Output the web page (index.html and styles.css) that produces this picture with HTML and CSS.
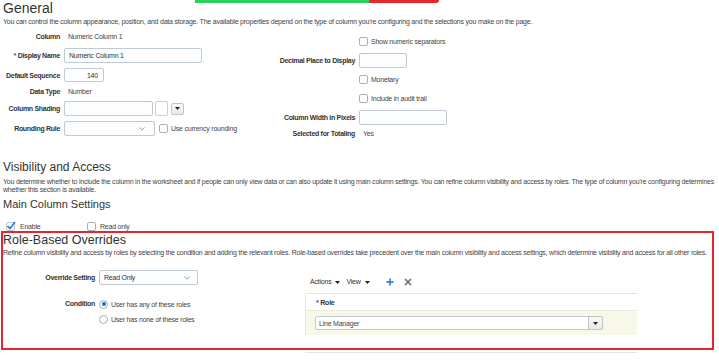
FILE: index.html
```html
<!DOCTYPE html>
<html lang="en">
<head>
  <meta charset="UTF-8">
  <title>Edit Column</title>
  <link rel="stylesheet" href="styles.css">
</head>
<body>

  <div class="progress">
    <div class="progress-ok"></div>
    <div class="progress-bad"></div>
  </div>

  <div id="page">
    <h2 class="title-general">General</h2>
    <p class="desc">You can control the column appearance, position, and data storage. The available properties depend on the type of column you're configuring and the selections you make on the page.</p>

    <div class="form">
      <div class="form-grid left-grid">
        <div class="label">Column</div>
        <div class="value">Numeric Column 1</div>

        <div class="label"><span class="req">*</span> Display Name</div>
        <div><input class="field name-field" type="text" value="Numeric Column 1"></div>

        <div class="label">Default Sequence</div>
        <div><input class="field seq-field" type="text" value="140"></div>

        <div class="label">Data Type</div>
        <div class="value">Number</div>

        <div class="label">Column Shading</div>
        <div class="inline">
          <input class="field shade-field" type="text">
          <span class="swatch"></span>
          <span class="drop-btn">
            <svg width="5" height="3" viewBox="0 0 5 3"><polygon points="0,0 5,0 2.5,3" fill="#222"/></svg>
          </span>
        </div>

        <div class="label">Rounding Rule</div>
        <div class="inline">
          <div class="select rounding-select">
            <span></span>
            <svg class="chevron" width="6" height="4" viewBox="0 0 6 4"><polyline points="0.5,0.5 3,3.2 5.5,0.5" fill="none" stroke="#8c8c8c" stroke-width="0.8"/></svg>
          </div>
          <span class="check rounding-check"></span>
          <span class="check-text">Use currency rounding</span>
        </div>
      </div>

      <div class="form-grid right-grid">
        <div></div>
        <div class="inline"><span class="check"></span><span class="check-text">Show numeric separators</span></div>

        <div class="label">Decimal Place to Display</div>
        <div><input class="field decimal-field" type="text"></div>

        <div></div>
        <div class="inline"><span class="check"></span><span class="check-text">Monetary</span></div>

        <div></div>
        <div class="inline"><span class="check"></span><span class="check-text">Include in audit trail</span></div>

        <div class="label">Column Width in Pixels</div>
        <div><input class="field width-field" type="text"></div>

        <div class="label">Selected for Totaling</div>
        <div class="value">Yes</div>
      </div>
    </div>

    <h2 class="title-section">Visibility and Access</h2>
    <p class="desc desc-tight">You determine whether to include the column in the worksheet and if people can only view data or can also update it using main column settings. You can refine column visibility and access by roles. The type of column you're configuring determines whether this section is available.</p>

    <h3 class="title-sub">Main Column Settings</h3>

    <div class="main-checks">
      <div class="inline enable-item">
        <span class="check checked">
          <svg width="10" height="10" viewBox="0 0 10 10"><polyline points="1.5,5 4,7.5 9,1" fill="none" stroke="#2d7bd3" stroke-width="1.7"/></svg>
        </span>
        <span class="check-text">Enable</span>
      </div>
      <div class="inline">
        <span class="check"></span>
        <span class="check-text">Read only</span>
      </div>
    </div>

    <h2 class="title-section title-role">Role-Based Overrides</h2>
    <p class="desc">Refine column visibility and access by roles by selecting the condition and adding the relevant roles. Role-based overrides take precedent over the main column visibility and access settings, which determine visibility and access for all other roles.</p>

    <div class="role-body">
      <div class="role-form">
        <div class="role-row">
          <div class="label role-label">Override Setting</div>
          <div class="select override-select">
            <span>Read Only</span>
            <svg class="chevron" width="6" height="4" viewBox="0 0 6 4"><polyline points="0.5,0.5 3,3.2 5.5,0.5" fill="none" stroke="#8c8c8c" stroke-width="0.8"/></svg>
          </div>
        </div>
        <div class="role-row cond-row">
          <div class="label role-label cond-label">Condition</div>
          <div class="radios">
            <div class="inline radio-line"><span class="radio on"></span><span class="check-text">User has any of these roles</span></div>
            <div class="inline radio-line"><span class="radio"></span><span class="check-text">User has none of these roles</span></div>
          </div>
        </div>
      </div>

      <div class="role-table">
        <div class="toolbar">
          <span class="menu">Actions<svg width="5" height="3" viewBox="0 0 5 3"><polygon points="0,0 5,0 2.5,3" fill="#222"/></svg></span>
          <span class="menu">View<svg width="5" height="3" viewBox="0 0 5 3"><polygon points="0,0 5,0 2.5,3" fill="#222"/></svg></span>
          <svg class="tool-add" width="8" height="8" viewBox="0 0 8 8"><path d="M4 0.5v7M0.5 4h7" stroke="#3b8de0" stroke-width="1.8"/></svg>
          <svg class="tool-del" width="8" height="8" viewBox="0 0 8 8"><path d="M1 1l6 6M7 1l-6 6" stroke="#707070" stroke-width="1.7"/></svg>
        </div>
        <div class="table-head"><span class="req">*</span>&nbsp;Role</div>
        <div class="table-row">
          <div class="role-select">
            <span>Line Manager</span>
            <span class="drop-btn role-btn">
              <svg width="5" height="3" viewBox="0 0 5 3"><polygon points="0,0 5,0 2.5,3" fill="#222"/></svg>
            </span>
          </div>
        </div>
        <div class="table-foot"></div>
      </div>
    </div>
  </div>

  <div class="highlight"></div>

</body>
</html>
```

FILE: styles.css
```css
html, body {
  margin: 0;
  background: #fff;
}

body {
  font-family: "Liberation Sans", Arial, sans-serif;
  font-size: 7px;
  letter-spacing: -0.22px;
  color: #333;
}

#page {
  padding: 1px 0 0 3px;
}

/* overlays */
.progress {
  position: absolute;
  top: 0;
  left: 195px;
  width: 244px;
  height: 3px;
  display: flex;
  border-bottom-right-radius: 3px;
  overflow: hidden;
}

.progress-ok {
  width: 174px;
  background: #2ed158;
}

.progress-bad {
  flex: 1;
  background: #e8262d;
}

.highlight {
  position: absolute;
  left: 1px;
  top: 231px;
  width: 709px;
  height: 115px;
  border: 2px solid #e5262e;
  pointer-events: none;
}

/* headings */
h2, h3, p {
  margin: 0;
  font-weight: normal;
}

.title-general {
  font-size: 14px;
  line-height: 15px;
  letter-spacing: 0;
  color: #333;
}

.title-section {
  font-size: 12px;
  line-height: 14px;
  letter-spacing: 0;
  margin-top: 19px;
  color: #333;
}

.title-role {
  font-size: 12.5px;
  margin-top: 1px;
}

.title-sub {
  font-size: 11px;
  line-height: 12px;
  letter-spacing: 0;
  margin-top: 4px;
  color: #333;
}

.desc {
  line-height: 9px;
  margin-top: 1px;
  color: #444;
}

.desc-tight {
  line-height: 8px;
  margin-top: 4px;
}

/* general form */
.form {
  display: flex;
  margin-top: 1px;
}

.form-grid {
  display: grid;
  column-gap: 4px;
  align-items: center;
}

.left-grid {
  width: 247px;
  grid-template-columns: 57px auto;
  grid-template-rows: 18px 21px 18px 14px 21px 19px;
}

.right-grid {
  padding-top: 5px;
  grid-template-columns: 105px auto;
  grid-template-rows: 18px 20px 19px 19px 18px 15px;
}

.label {
  font-weight: bold;
  letter-spacing: -0.3px;
  text-align: right;
  white-space: nowrap;
  color: #333;
}

.req {
  color: #1d5fa8;
  font-weight: bold;
}

.value {
  padding-left: 4px;
  color: #444;
}

.inline {
  display: flex;
  align-items: center;
}

.field {
  display: block;
  box-sizing: border-box;
  height: 15px;
  margin: 0;
  padding: 0 4px;
  border: 1px solid #bfcad5;
  border-radius: 2px;
  background: #fcfdfe;
  font-family: inherit;
  font-size: 7px;
  letter-spacing: -0.2px;
  color: #333;
  outline: none;
}

.name-field { width: 138px; }
.seq-field { width: 40px; height: 14px; text-align: right; padding-right: 5px; }
.shade-field { width: 89px; }
.decimal-field { width: 48px; }
.width-field { width: 88px; }

.swatch {
  box-sizing: border-box;
  width: 13px;
  height: 15px;
  margin-left: 2px;
  border: 1px solid #c8d0d8;
  border-radius: 2px;
  background: #fff;
}

.drop-btn {
  box-sizing: border-box;
  width: 13px;
  height: 12px;
  margin-left: 3px;
  display: flex;
  align-items: center;
  justify-content: center;
  border: 1px solid #c4c4c4;
  border-radius: 2px;
  background: linear-gradient(#fafafa, #e9e9e9);
}

.select {
  box-sizing: border-box;
  height: 15px;
  display: flex;
  align-items: center;
  justify-content: space-between;
  padding: 0 7px 0 4px;
  border: 1px solid #bfcad5;
  border-radius: 2px;
  background: #fcfdfe;
  color: #333;
}

.rounding-select { width: 91px; padding-right: 9px; }
.override-select { width: 99px; }

.check {
  box-sizing: border-box;
  width: 9px;
  height: 9px;
  border: 1px solid #a7b0ba;
  border-radius: 2px;
  background: #fff;
  flex-shrink: 0;
  position: relative;
}

.check.checked {
  border-color: #c3c9cf;
}

.check.checked svg {
  position: absolute;
  left: -1px;
  top: -2px;
}

.rounding-check {
  margin-left: 4px;
}

.check-text {
  margin-left: 3px;
  color: #444;
  white-space: nowrap;
}

/* visibility */
.main-checks {
  display: flex;
  height: 12px;
  margin-top: 10px;
  padding-left: 3px;
  align-items: center;
}

.enable-item {
  width: 81px;
}

.enable-item .check-text {
  margin-left: 5px;
}

.main-checks .inline:last-child .check-text {
  margin-left: 4px;
}

/* role overrides */
.role-body {
  display: flex;
  margin-top: 13px;
}

.role-form {
  width: 302px;
}

.role-row {
  display: flex;
}

.role-label {
  width: 92px;
  margin-right: 4px;
  line-height: 15px;
}

.cond-row {
  margin-top: 11px;
}

.cond-label {
  line-height: 16px;
}

.radio-line {
  height: 16px;
}

.radio-line + .radio-line {
  margin-top: -1px;
}

.radio {
  box-sizing: border-box;
  width: 9px;
  height: 9px;
  border: 1px solid #a2abb4;
  border-radius: 50%;
  background: #fff;
  position: relative;
}

.radio.on::after {
  content: "";
  position: absolute;
  left: 1.5px;
  top: 1.5px;
  width: 4px;
  height: 4px;
  border-radius: 50%;
  background: #1670d0;
}

.role-table {
  width: 332px;
}

.toolbar {
  height: 23px;
  box-sizing: border-box;
  padding: 4px 0 0 5px;
  display: flex;
  align-items: flex-start;
  line-height: 16px;
}

.menu {
  display: flex;
  align-items: center;
  height: 16px;
  margin-right: 6px;
  color: #333;
}

.menu svg {
  margin-left: 4px;
}

.tool-add {
  margin: 4px 0 0 10px;
}

.tool-del {
  margin: 4px 0 0 10px;
}

.table-head {
  box-sizing: border-box;
  height: 17px;
  padding-left: 10px;
  border-top: 1px solid #e1e5e9;
  border-left: 1px solid #e1e5e9;
  font-weight: bold;
  line-height: 17px;
  color: #333;
}

.table-row {
  box-sizing: border-box;
  height: 25px;
  padding-left: 9px;
  display: flex;
  align-items: center;
  border-top: 1px solid #ebebdc;
  border-left: 1px solid #e1e5e9;
  background: #f8f8e9;
}

.role-select {
  box-sizing: border-box;
  width: 288px;
  height: 14px;
  display: flex;
  align-items: center;
  justify-content: space-between;
  padding-left: 3px;
  border: 1px solid #bfcad5;
  border-radius: 2px;
  background: #fff;
  color: #444;
}

.role-btn {
  width: 15px;
  height: 14px;
  margin: -1px -1px -1px 0;
}

.table-foot {
  height: 18px;
  box-sizing: border-box;
  border-bottom: 1px solid #e1e5e9;
}
```
